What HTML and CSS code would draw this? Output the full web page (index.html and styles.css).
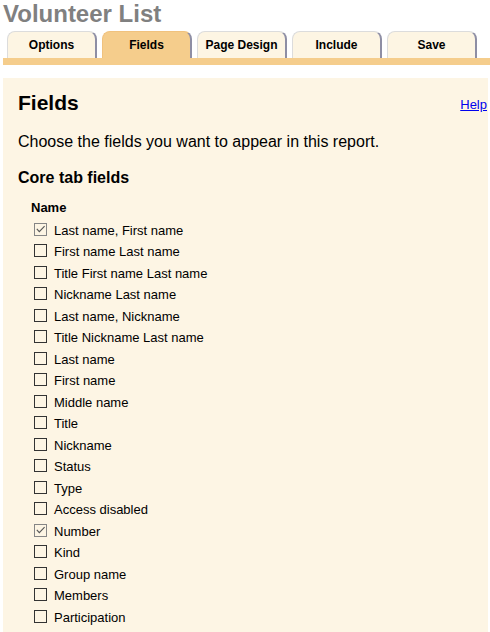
FILE: index.html
```html
<!DOCTYPE html>
<html>
<head>
<meta charset="utf-8">
<link rel="stylesheet" href="styles.css">
</head>
<body>
<div class="title">Volunteer List</div>
<div class="tabs">
  <div class="tab">Options</div>
  <div class="tab active">Fields</div>
  <div class="tab">Page Design</div>
  <div class="tab">Include</div>
  <div class="tab">Save</div>
</div>
<div class="tabbar"></div>
<div class="panel">
  <div class="head">
    <h1 class="heading">Fields</h1>
    <a class="help" href="#">Help</a>
  </div>
  <p class="intro">Choose the fields you want to appear in this report.</p>
  <h2 class="sub">Core tab fields</h2>
  <div class="group">Name</div>
  <ul class="fields">
    <li class="row"><span class="box checked"><svg width="11" height="11" viewBox="0 0 11 11"><path d="M1.8 4.8 L4.3 7.6 L9.6 2.2" fill="none" stroke="#555555" stroke-width="1.1"/></svg></span>Last name, First name</li>
    <li class="row"><span class="box"></span>First name Last name</li>
    <li class="row"><span class="box"></span>Title First name Last name</li>
    <li class="row"><span class="box"></span>Nickname Last name</li>
    <li class="row"><span class="box"></span>Last name, Nickname</li>
    <li class="row"><span class="box"></span>Title Nickname Last name</li>
    <li class="row"><span class="box"></span>Last name</li>
    <li class="row"><span class="box"></span>First name</li>
    <li class="row"><span class="box"></span>Middle name</li>
    <li class="row"><span class="box"></span>Title</li>
    <li class="row"><span class="box"></span>Nickname</li>
    <li class="row"><span class="box"></span>Status</li>
    <li class="row"><span class="box"></span>Type</li>
    <li class="row"><span class="box"></span>Access disabled</li>
    <li class="row"><span class="box checked"><svg width="11" height="11" viewBox="0 0 11 11"><path d="M1.8 4.8 L4.3 7.6 L9.6 2.2" fill="none" stroke="#555555" stroke-width="1.1"/></svg></span>Number</li>
    <li class="row"><span class="box"></span>Kind</li>
    <li class="row"><span class="box"></span>Group name</li>
    <li class="row"><span class="box"></span>Members</li>
    <li class="row"><span class="box"></span>Participation</li>
  </ul>
</div>
</body>
</html>
```

FILE: styles.css
```css
html, body {
  margin: 0;
  padding: 0;
  background: #ffffff;
}
body {
  padding: 0 0 0 3px;
  font-family: "Liberation Sans", Arial, sans-serif;
  color: #000;
  overflow: hidden;
}
.title {
  font-size: 24px;
  font-weight: bold;
  line-height: 28px;
  color: #808080;
}
.tabs {
  display: flex;
  gap: 5px;
  margin-top: 3px;
  padding-left: 4px;
}
.tab {
  box-sizing: border-box;
  width: 90px;
  height: 27px;
  background: #fdf5e3;
  border: 1px solid #dcdcdc;
  border-right: 2px solid #8e8ea4;
  border-bottom: none;
  border-radius: 8px 8px 0 0;
  font-size: 12px;
  font-weight: bold;
  line-height: 26px;
  text-align: center;
}
.tab.active {
  background: #f5cd8c;
  border-color: #f0c27e;
  border-right-color: #8e8ea4;
}
.tabbar {
  height: 7px;
  background: #f5cd8c;
}
.panel {
  margin-top: 13px;
  margin-right: 2px;
  background: #fdf5e4;
  padding: 13px 0 20px 15px;
}
.head {
  display: flex;
  justify-content: space-between;
  align-items: baseline;
}
.heading {
  margin: 0;
  font-size: 21px;
  line-height: 24px;
  font-weight: bold;
}
.help {
  font-size: 13px;
  color: #0000ee;
  margin-right: 1px;
  position: relative;
  top: -1px;
}
.intro {
  margin: 18px 0 0 0;
  font-size: 16px;
  line-height: 18px;
}
.sub {
  margin: 18px 0 0 0;
  font-size: 16px;
  line-height: 18px;
  font-weight: bold;
}
.group {
  margin: 13px 0 0 13px;
  font-size: 13px;
  line-height: 15px;
  font-weight: bold;
}
.fields {
  list-style: none;
  margin: 4.75px 0 0 16px;
  padding: 0;
}
.row {
  font-size: 13px;
  line-height: 21.5px;
  height: 21.5px;
  white-space: nowrap;
}
.box {
  box-sizing: border-box;
  display: inline-block;
  width: 13px;
  height: 13px;
  border: 1px solid #333333;
  vertical-align: -1px;
  margin-right: 7px;
}
.box.checked {
  border-color: #858585;
}
.box svg {
  display: block;
}
```
